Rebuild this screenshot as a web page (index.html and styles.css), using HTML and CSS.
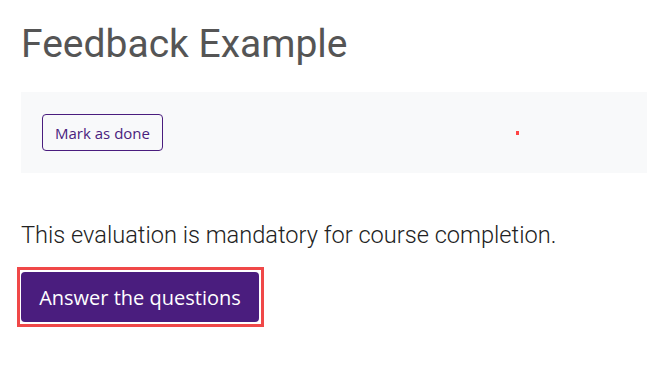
FILE: index.html
```html
<!DOCTYPE html>
<html lang="en">
<head>
<meta charset="utf-8">
<title>Feedback Example</title>
<link rel="stylesheet" href="styles.css">
</head>
<body>
<main class="page">
  <h1 class="title">Feedback Example</h1>
  <section class="activity-bar">
    <button class="btn-outline" type="button">Mark as done</button>
    <span class="marker"></span>
  </section>
  <p class="intro">This evaluation is mandatory for course completion.</p>
  <div class="highlight">
    <button class="btn-primary" type="button">Answer the questions</button>
  </div>
</main>
</body>
</html>
```

FILE: styles.css
```css
html, body {
  margin: 0;
  padding: 0;
  background: #ffffff;
}

.page {
  padding: 20px 0 0 21px;
  font-family: Roboto, "Liberation Sans", sans-serif;
}

.title {
  margin: 0 0 24px 0;
  font-family: Roboto, sans-serif;
  font-weight: 400;
  font-size: 39px;
  line-height: 48px;
  color: #555555;
  letter-spacing: 0;
}

.activity-bar {
  position: relative;
  background: #f8f9fa;
  height: 81px;
  display: flex;
  align-items: center;
  padding-left: 21px;
}

.btn-outline {
  font-family: "Open Sans", "Noto Sans", sans-serif;
  font-size: 15px;
  color: #4a1d7e;
  background: transparent;
  border: 1px solid #4a1d7e;
  border-radius: 4px;
  height: 37px;
  width: 121px;
  padding: 0;
  cursor: pointer;
}

.marker {
  position: absolute;
  left: 495px;
  top: 39px;
  width: 3px;
  height: 4px;
  background: #f44;
}

.intro {
  margin: 46px 0 0 0;
  font-family: Roboto, sans-serif;
  font-weight: 300;
  font-size: 23.6px;
  line-height: 32px;
  color: #222222;
}

.highlight {
  display: inline-block;
  margin: 16px 0 0 -4px;
  border: 3px solid #f04848;
  padding: 2px 2px 2px 1px;
}

.btn-primary {
  display: block;
  font-family: "Open Sans", "Noto Sans", sans-serif;
  font-size: 20px;
  color: #ffffff;
  background: #4a1d7e;
  border: none;
  border-radius: 4px;
  width: 238px;
  height: 50px;
  padding: 0;
}
```
